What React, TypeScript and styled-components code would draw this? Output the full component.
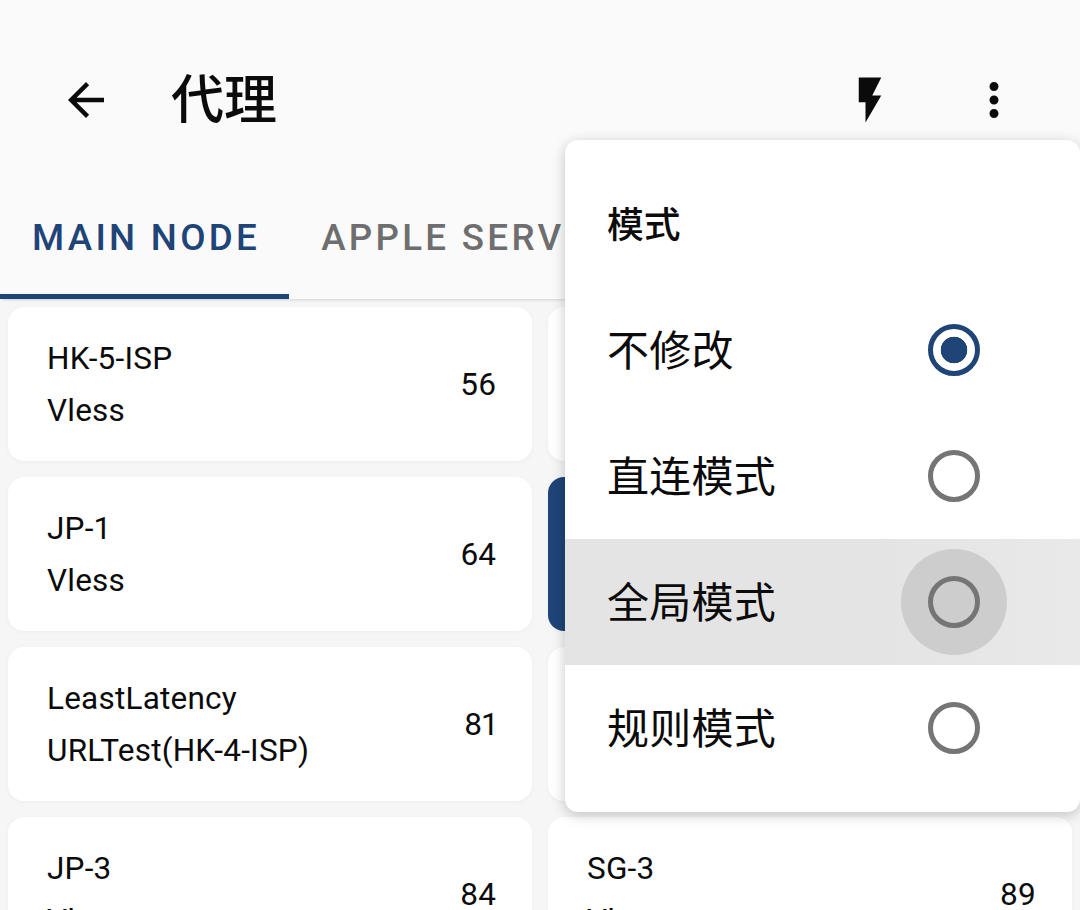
import * as React from "react";
import styled, { createGlobalStyle } from "styled-components";

const BLUE = "#1f4477";

const nodes = [
  { name: "HK-5-ISP", kind: "Vless", ping: "56" },
  {},
  { name: "JP-1", kind: "Vless", ping: "64" },
  { selected: true },
  { name: "LeastLatency", kind: "URLTest(HK-4-ISP)", ping: "81" },
  {},
  { name: "JP-3", kind: "Vless", ping: "84" },
  { name: "SG-3", kind: "Vless", ping: "89" },
];

const modes = [
  { label: "不修改", checked: true },
  { label: "直连模式" },
  { label: "全局模式", pressed: true },
  { label: "规则模式" },
];

const Icon = ({ d }: { d: string }) => (
  <IconBox viewBox="0 0 24 24">
    <path d={d} />
  </IconBox>
);

export default function App() {
  return (
    <Screen>
      <GlobalStyle />
      <Toolbar>
        <Icon d="M20 11H7.8l5.6-5.6L12 4l-8 8 8 8 1.4-1.4L7.8 13H20z" />
        <Title>代理</Title>
        <Actions>
          <Icon d="M7 2v11h3v9l7-12h-4l4-8z" />
          <Icon d="M12 8c1.1 0 2-.9 2-2s-.9-2-2-2-2 .9-2 2 .9 2 2 2zm0 2c-1.1 0-2 .9-2 2s.9 2 2 2 2-.9 2-2-.9-2-2-2zm0 6c-1.1 0-2 .9-2 2s.9 2 2 2 2-.9 2-2-.9-2-2-2z" />
        </Actions>
      </Toolbar>

      <Tabs>
        <Tab $active>MAIN NODE</Tab>
        <Tab>APPLE SERVICE</Tab>
      </Tabs>

      <Grid>
        {nodes.map((node, i) => (
          <Card key={i} $selected={node.selected}>
            <div>
              <CardLine>{node.name}</CardLine>
              <CardLine>{node.kind}</CardLine>
            </div>
            <Ping>{node.ping}</Ping>
          </Card>
        ))}
      </Grid>

      <Menu>
        <MenuTitle>模式</MenuTitle>
        {modes.map((mode) => (
          <MenuRow key={mode.label} $pressed={mode.pressed}>
            <MenuLabel>{mode.label}</MenuLabel>
            <RadioSlot $pressed={mode.pressed}>
              <Radio $checked={mode.checked} />
            </RadioSlot>
          </MenuRow>
        ))}
      </Menu>
    </Screen>
  );
}

const GlobalStyle = createGlobalStyle`
  html, body {
    margin: 0;
    padding: 0;
  }
  body {
    font-family: Roboto, "Noto Sans CJK SC", sans-serif;
    color: #0b0b0b;
  }
`;

const Screen = styled.div`
  position: relative;
  width: 1080px;
  height: 910px;
  overflow: hidden;
  background: #fafafa;
  display: flex;
  flex-direction: column;
`;

const Toolbar = styled.header`
  flex: none;
  display: flex;
  align-items: center;
  height: 116px;
  margin-top: 42px;
  padding: 0 59px;
`;

const IconBox = styled.svg`
  flex: none;
  width: 54px;
  height: 54px;
  fill: #0b0b0b;
`;

const Title = styled.h1`
  margin: 3px 0 0 58px;
  font-size: 53px;
  font-weight: 500;
  line-height: 1;
`;

const Actions = styled.div`
  margin-left: auto;
  display: flex;
  gap: 70px;
`;

const Tabs = styled.nav`
  flex: none;
  display: flex;
  height: 141px;
  overflow: hidden;
  background: #fafafa;
  box-shadow: 0 3px 3px -2px rgba(0, 0, 0, 0.14);
  position: relative;
  z-index: 1;
`;

const Tab = styled.div<{ $active?: boolean }>`
  flex: none;
  display: flex;
  align-items: center;
  box-sizing: border-box;
  height: 100%;
  padding: 22px 29px 0 32px;
  font-size: 36.75px;
  font-weight: 480;
  letter-spacing: 3.28px;
  white-space: nowrap;
  color: ${(p) => (p.$active ? BLUE : "#6e6e6e")};
  border-bottom: 5px solid ${(p) => (p.$active ? BLUE : "transparent")};
`;

const Grid = styled.main`
  flex: none;
  display: grid;
  grid-template-columns: 1fr 1fr;
  grid-auto-rows: 154px;
  gap: 16px;
  padding: 8px 8px 0;
  background: #f6f6f6;
`;

const Card = styled.div<{ $selected?: boolean }>`
  display: flex;
  align-items: center;
  justify-content: space-between;
  padding: 0 36px 0 39px;
  border-radius: 16px;
  background: ${(p) => (p.$selected ? BLUE : "#fff")};
  box-shadow: 0 1px 5px rgba(0, 0, 0, 0.04);
`;

const CardLine = styled.div`
  font-size: 31.5px;
  line-height: 52px;
  letter-spacing: 0.22px;
  white-space: nowrap;
  transform: translateY(1px);
`;

const Ping = styled.span`
  font-size: 31.5px;
  font-feature-settings: "pnum";
`;

const Menu = styled.aside`
  position: absolute;
  z-index: 2;
  top: 140px;
  left: 565px;
  width: 515px;
  height: 672px;
  overflow: hidden;
  border-radius: 13px;
  background: #fff;
  box-shadow: 0 3px 14px rgba(0, 0, 0, 0.22);
`;

const MenuTitle = styled.h2`
  box-sizing: border-box;
  display: flex;
  align-items: center;
  height: 147px;
  margin: 0;
  padding: 16px 42px 0;
  font-size: 36.75px;
  font-weight: 500;
`;

const MenuRow = styled.div<{ $pressed?: boolean }>`
  display: flex;
  align-items: center;
  justify-content: space-between;
  height: 126px;
  padding: 0 73px 0 43px;
  font-size: 42px;
  background: ${(p) =>
    p.$pressed ? "linear-gradient(90deg, #e4e4e4 60%, #e9e9e9)" : "transparent"};
`;

const MenuLabel = styled.span`
  margin: 0 0 5px -1px;
  letter-spacing: 0.25px;
`;

const RadioSlot = styled.div<{ $pressed?: boolean }>`
  width: 106px;
  height: 106px;
  display: flex;
  align-items: center;
  justify-content: center;
  border-radius: 50%;
  background: ${(p) => (p.$pressed ? "#cdcdcd" : "transparent")};
`;

const Radio = styled.span<{ $checked?: boolean }>`
  box-sizing: border-box;
  width: 52px;
  height: 52px;
  border-radius: 50%;
  border: 5.25px solid ${(p) => (p.$checked ? BLUE : "#757575")};
  background: ${(p) =>
    p.$checked ? `radial-gradient(circle, ${BLUE} 13px, transparent 13.6px)` : "transparent"};
`;
